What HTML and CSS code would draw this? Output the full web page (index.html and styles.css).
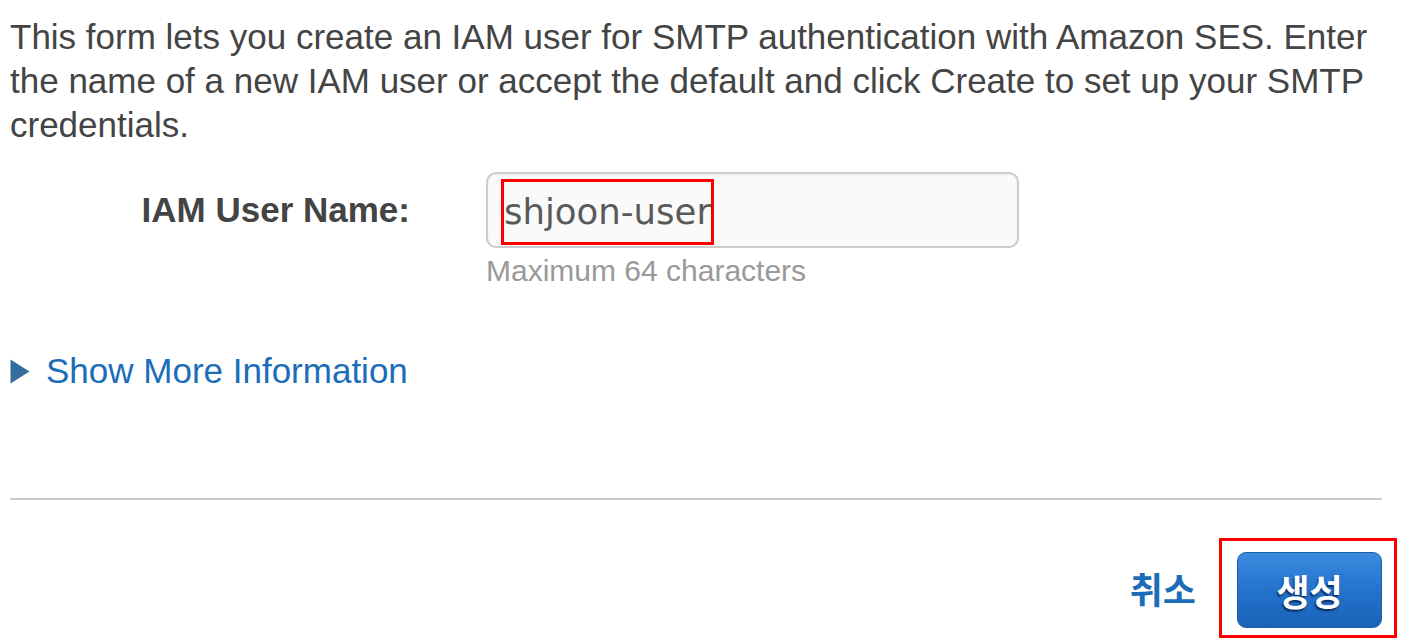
FILE: index.html
```html
<!DOCTYPE html>
<html lang="en">
<head>
<meta charset="utf-8">
<title>Create SMTP credentials</title>
<link rel="stylesheet" href="styles.css">
</head>
<body>
<div class="page">
  <p class="intro">This form lets you create an IAM user for SMTP authentication with Amazon SES. Enter the name of a new IAM user or accept the default and click Create to set up your SMTP credentials.</p>

  <div class="form-row">
    <label class="field-label" for="iam-user">IAM User Name:</label>
    <div class="field">
      <div class="text-input" id="iam-user"><span class="mark mark-text">shjoon-user</span></div>
      <div class="hint">Maximum 64 characters</div>
    </div>
  </div>

  <div class="more">
    <svg class="caret" width="20" height="25" viewBox="0 0 20 25" aria-hidden="true"><polygon points="0.5,0.5 19.5,12.5 0.5,24.5" fill="#346c9d"/></svg>
    <a class="more-link" href="#">Show More Information</a>
  </div>

  <hr class="divider">

  <div class="actions">
    <a class="cancel" href="#">취소</a>
    <div class="mark mark-button">
      <button class="primary" type="button">생성</button>
    </div>
  </div>
</div>
</body>
</html>
```

FILE: styles.css
```css
html, body {
  margin: 0;
  padding: 0;
  background: #ffffff;
}

body {
  font-family: "Liberation Sans", Arial, sans-serif;
  color: #444444;
  overflow: hidden;
}

.page {
  width: 1372px;
  padding: 15px 0 0 10px;
}

.intro {
  margin: 0;
  font-size: 35px;
  line-height: 44px;
  color: #444444;
}

.form-row {
  display: grid;
  grid-template-columns: 400px 533px;
  column-gap: 76px;
  margin-top: 25px;
  align-items: start;
}

.field-label {
  text-align: right;
  font-weight: bold;
  font-size: 35px;
  line-height: 76px;
  color: #444444;
}

.text-input {
  box-sizing: border-box;
  height: 76px;
  border: 2px solid #cccccc;
  border-radius: 10px;
  background: #fafafa;
  box-shadow: inset 0 1px 2px rgba(0, 0, 0, 0.06);
  padding: 5px 13px 0 13px;
  display: flex;
  align-items: flex-start;
}

.mark {
  border: 3px solid #ff0000;
}

.mark-text {
  display: inline-block;
  box-sizing: border-box;
  height: 66px;
  line-height: 60px;
  font-family: "DejaVu Sans", Verdana, sans-serif;
  font-size: 35.5px;
  color: #5a5a5a;
  padding: 0;
}

.hint {
  margin-top: 5px;
  font-size: 30px;
  line-height: 36px;
  color: #999999;
}

.more {
  display: flex;
  align-items: center;
  gap: 16px;
  margin-top: 60px;
  height: 44px;
}

.caret {
  display: block;
  filter: blur(0.5px);
}

.more-link {
  font-size: 35px;
  line-height: 44px;
  color: #1c6db8;
  text-decoration: none;
}

.divider {
  margin: 105px 0 0 0;
  border: 0;
  height: 2px;
  background: #cccccc;
}

.actions {
  display: flex;
  justify-content: flex-end;
  align-items: center;
  gap: 23px;
  margin-top: 38px;
  margin-right: -15px;
}

.cancel {
  font-family: "Noto Sans CJK KR", "Liberation Sans", sans-serif;
  font-weight: bold;
  font-size: 36px;
  line-height: 44px;
  color: #1c6db8;
  text-decoration: none;
}

.mark-button {
  box-sizing: border-box;
  width: 178px;
  height: 100px;
  padding: 11px 12px 0 15px;
}

.primary {
  display: block;
  box-sizing: border-box;
  width: 145px;
  height: 76px;
  border: 1px solid #1b5ea8;
  border-radius: 9px;
  background: linear-gradient(to bottom, #3a8be0 0%, #2573cc 50%, #1a63b8 100%);
  color: #ffffff;
  font-family: "Noto Sans CJK KR", "Liberation Sans", sans-serif;
  font-weight: bold;
  font-size: 36px;
  line-height: 1;
  text-shadow: -1px 2px 2px rgba(0, 20, 60, 0.75);
  padding: 0;
  cursor: pointer;
}
```
